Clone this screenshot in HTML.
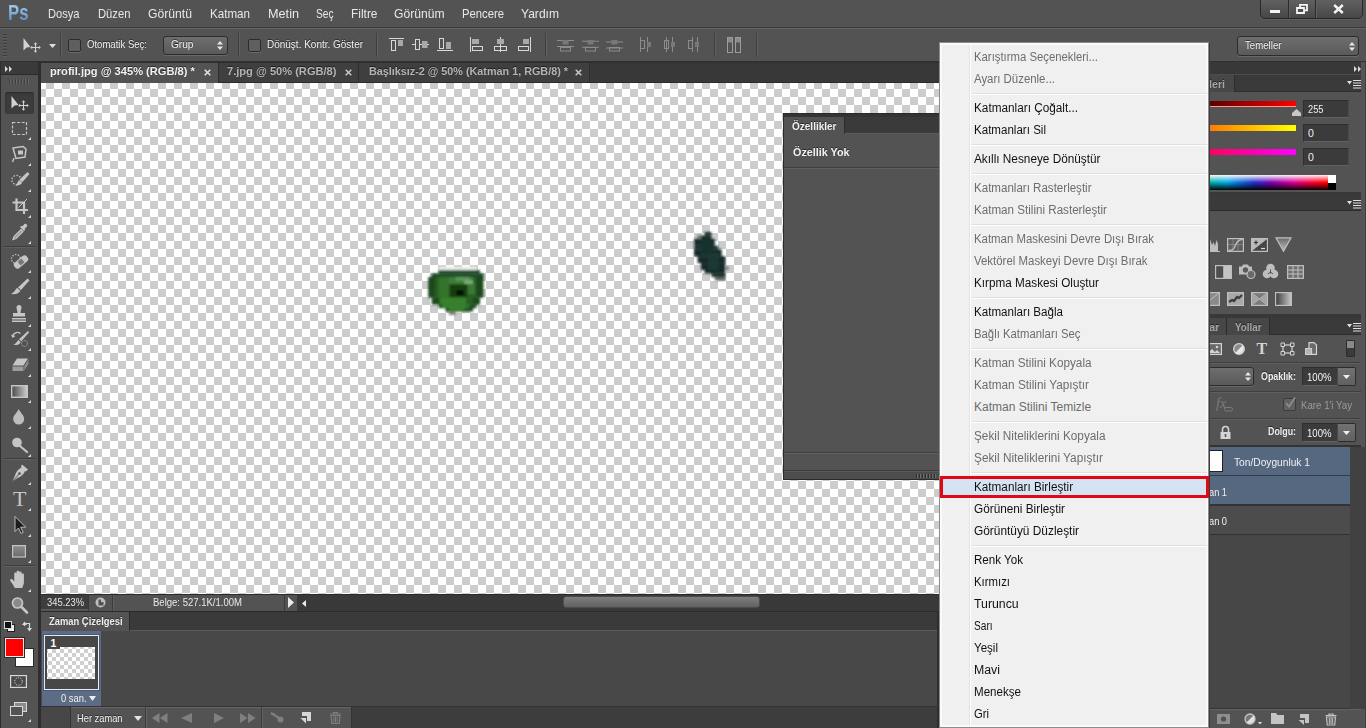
<!DOCTYPE html>
<html lang="tr"><head><meta charset="utf-8"><title>Photoshop</title>
<style>
html,body{margin:0;padding:0}
body{width:1366px;height:728px;overflow:hidden;position:relative;background:#535353;font-family:"Liberation Sans", sans-serif;}
.t{position:absolute;white-space:nowrap;transform-origin:0 0;display:block}
.a{position:absolute}
svg{position:absolute;overflow:visible}
</style></head>
<body>
<div style="position:absolute;left:0px;top:0px;width:1366px;height:27px;background:#535353;"></div>
<div style="position:absolute;left:0px;top:27px;width:1366px;height:1px;background:#383838;"></div>
<div style="position:absolute;left:0px;top:28px;width:1366px;height:34px;background:#535353;border-top:1px solid #656565;box-sizing:border-box;"></div>
<div style="position:absolute;left:0px;top:61px;width:1366px;height:2px;background:#303030;"></div>
<div style="position:absolute;left:0px;top:63px;width:1366px;height:20px;background:#383838;"></div>
<div style="position:absolute;left:0px;top:62px;width:40px;height:666px;background:#535353;"></div>
<div style="position:absolute;left:0px;top:62px;width:40px;height:13px;background:#3a3a3a;"></div>
<div style="position:absolute;left:40px;top:62px;width:1px;height:666px;background:#2b2b2b;"></div>
<div class="a" style="left:41px;top:83px;width:899px;height:511px;background-color:#fff;background-image:conic-gradient(#cccccc 25%,#ffffff 0 50%,#cccccc 0 75%,#ffffff 0);background-size:16px 16px;background-position:-3px -2px;"></div>
<div style="position:absolute;left:41px;top:82px;width:900px;height:1px;background:#2b2b2b;"></div>
<div style="position:absolute;left:41px;top:594px;width:899px;height:18px;background:#3a3a3a;"></div>
<div style="position:absolute;left:41px;top:594px;width:256px;height:17px;background:#535353;"></div>
<div style="position:absolute;left:41px;top:612px;width:899px;height:19px;background:#3a3a3a;"></div>
<div style="position:absolute;left:41px;top:631px;width:899px;height:75px;background:#484848;"></div>
<div style="position:absolute;left:41px;top:706px;width:899px;height:22px;background:#3f3f3f;"></div>
<div style="position:absolute;left:1209px;top:62px;width:157px;height:666px;background:#535353;"></div>
<span class="t" style="left:8px;top:1.7px;font-size:21.5px;line-height:23.5px;color:#6c9fd6;font-weight:bold;transform:scaleX(0.779);background:linear-gradient(#9ac2ea 25%,#5a92ce 80%);-webkit-background-clip:text;background-clip:text;-webkit-text-fill-color:transparent;">Ps</span>
<span class="t" style="left:47.5px;top:6px;font-size:13px;line-height:15px;color:#e8e8e8;transform:scaleX(0.855);">Dosya</span>
<span class="t" style="left:97.5px;top:6px;font-size:13px;line-height:15px;color:#e8e8e8;transform:scaleX(0.865);">Düzen</span>
<span class="t" style="left:148px;top:6px;font-size:13px;line-height:15px;color:#e8e8e8;transform:scaleX(0.936);">Görüntü</span>
<span class="t" style="left:210px;top:6px;font-size:13px;line-height:15px;color:#e8e8e8;transform:scaleX(0.893);">Katman</span>
<span class="t" style="left:268px;top:6px;font-size:13px;line-height:15px;color:#e8e8e8;transform:scaleX(0.975);">Metin</span>
<span class="t" style="left:316px;top:6px;font-size:13px;line-height:15px;color:#e8e8e8;transform:scaleX(0.781);">Seç</span>
<span class="t" style="left:351px;top:6px;font-size:13px;line-height:15px;color:#e8e8e8;transform:scaleX(0.917);">Filtre</span>
<span class="t" style="left:393.5px;top:6px;font-size:13px;line-height:15px;color:#e8e8e8;transform:scaleX(0.932);">Görünüm</span>
<span class="t" style="left:462px;top:6px;font-size:13px;line-height:15px;color:#e8e8e8;transform:scaleX(0.867);">Pencere</span>
<span class="t" style="left:521px;top:6px;font-size:13px;line-height:15px;color:#e8e8e8;transform:scaleX(0.928);">Yardım</span>
<div class="a" style="left:3px;top:34px;width:4px;height:23px;background:repeating-linear-gradient(#3c3c3c 0 1px,#5e5e5e 1px 2px,#535353 2px 3px)"></div>
<svg style="left:23px;top:37.5px" width="18" height="15" viewBox="0 0 18 15"><path d="M0.5 0 L0.5 12.5 L3.6 9.5 L7.5 9 Z" fill="#d2d2d2"/><path d="M12.5 5.5v8M8.5 9.5h8" stroke="#d2d2d2" stroke-width="1.1" fill="none"/><path d="M12.5 4.2l1.8 2h-3.6zM12.5 14.8l1.8-2h-3.6zM7.2 9.5l2-1.8v3.6zM17.8 9.5l-2-1.8v3.6z" fill="#d2d2d2"/></svg>
<svg style="left:49px;top:44px" width="7" height="4" viewBox="0 0 7 4"><path d="M0 0h7l-3.5 4z" fill="#e0e0e0"/></svg>
<div style="position:absolute;left:60px;top:33px;width:1px;height:24px;background:#3e3e3e;"></div><div style="position:absolute;left:61px;top:33px;width:1px;height:24px;background:#616161;"></div>
<div style="position:absolute;left:68px;top:39px;width:13px;height:13px;background:#5f5f5f;border:1px solid #2c2c2c;box-sizing:border-box;border-radius:2px;box-shadow:0 1px 0 #6a6a6a;"></div>
<span class="t" style="left:87.3px;top:38.4px;font-size:10.5px;line-height:12.5px;color:#f0f0f0;transform:scaleX(0.910);text-shadow:0 -1px 0 rgba(0,0,0,.55);">Otomatik Seç:</span>
<div style="position:absolute;left:163px;top:36px;width:65px;height:19px;background:linear-gradient(#6e6e6e,#5a5a5a);border:1px solid #2c2c2c;box-sizing:border-box;border-radius:3px;box-shadow:0 1px 0 #686868;"></div>
<span class="t" style="left:171px;top:38.2px;font-size:10.5px;line-height:12.5px;color:#f0f0f0;transform:scaleX(0.964);text-shadow:0 -1px 0 rgba(0,0,0,.55);">Grup</span>
<svg style="left:217px;top:41px" width="6" height="9" viewBox="0 0 6 9"><path d="M0 3.500h6l-3-3.500zM0 5.500h6l-3 3.500z" fill="#e8e8e8"/></svg>
<div style="position:absolute;left:238px;top:33px;width:1px;height:24px;background:#3e3e3e;"></div><div style="position:absolute;left:239px;top:33px;width:1px;height:24px;background:#616161;"></div>
<div style="position:absolute;left:248px;top:39px;width:13px;height:13px;background:#5f5f5f;border:1px solid #2c2c2c;box-sizing:border-box;border-radius:2px;box-shadow:0 1px 0 #6a6a6a;"></div>
<span class="t" style="left:266.5px;top:38.4px;font-size:10.5px;line-height:12.5px;color:#f0f0f0;transform:scaleX(0.951);text-shadow:0 -1px 0 rgba(0,0,0,.55);">Dönüşt. Kontr. Göster</span>
<div style="position:absolute;left:376px;top:33px;width:1px;height:24px;background:#3e3e3e;"></div><div style="position:absolute;left:377px;top:33px;width:1px;height:24px;background:#616161;"></div>
<div style="position:absolute;left:41px;top:63px;width:177px;height:20px;background:#535353;"></div>
<div style="position:absolute;left:218px;top:62px;width:1px;height:20px;background:#2d2d2d;"></div>
<div style="position:absolute;left:219px;top:63px;width:371px;height:19px;background:#3f3f3f;"></div>
<div style="position:absolute;left:358px;top:62px;width:1px;height:20px;background:#2d2d2d;"></div>
<div style="position:absolute;left:589px;top:62px;width:1px;height:20px;background:#2d2d2d;"></div>
<span class="t" style="left:50px;top:65.3px;font-size:11.5px;line-height:13.5px;color:#f2f2f2;font-weight:bold;transform:scaleX(0.967);text-shadow:0 -1px 0 rgba(0,0,0,.5);">profil.jpg @ 345% (RGB/8) *</span>
<span class="t" style="left:226.5px;top:65.3px;font-size:11.5px;line-height:13.5px;color:#b4b4b4;font-weight:bold;transform:scaleX(0.965);text-shadow:0 -1px 0 rgba(0,0,0,.5);">7.jpg @ 50% (RGB/8)</span>
<span class="t" style="left:368.5px;top:65.3px;font-size:11.5px;line-height:13.5px;color:#b4b4b4;font-weight:bold;transform:scaleX(0.939);text-shadow:0 -1px 0 rgba(0,0,0,.5);">Başlıksız-2 @ 50% (Katman 1, RGB/8) *</span>
<svg style="left:204px;top:69px" width="7" height="7" viewBox="0 0 7 7"><path d="M0.7 0.7l5.6 5.6M6.3 0.7l-5.6 5.6" stroke="#e6e6e6" stroke-width="1.5"/></svg>
<svg style="left:345px;top:69px" width="7" height="7" viewBox="0 0 7 7"><path d="M0.7 0.7l5.6 5.6M6.3 0.7l-5.6 5.6" stroke="#c8c8c8" stroke-width="1.5"/></svg>
<svg style="left:575px;top:69px" width="7" height="7" viewBox="0 0 7 7"><path d="M0.7 0.7l5.6 5.6M6.3 0.7l-5.6 5.6" stroke="#c8c8c8" stroke-width="1.5"/></svg>
<svg style="left:388px;top:36px" width="20" height="18" viewBox="0 0 20 18"><path d="M1 2.5h15" fill="none" stroke="#d8d8d8" stroke-width="1"/><rect x="3.5" y="4.5" width="4" height="10" fill="none" stroke="#d8d8d8" stroke-width="1"/><rect x="10" y="4" width="5" height="6" fill="#a9a9a9"/></svg>
<svg style="left:411px;top:36px" width="20" height="18" viewBox="0 0 20 18"><path d="M1 8.5h17" fill="none" stroke="#d8d8d8" stroke-width="1"/><rect x="4.5" y="3.5" width="4" height="10"  stroke="#d8d8d8" stroke-width="1" fill="#535353"/><rect x="11" y="5" width="5.5" height="7" fill="#a9a9a9"/></svg>
<svg style="left:436px;top:36px" width="20" height="18" viewBox="0 0 20 18"><path d="M1 14.5h16" fill="none" stroke="#d8d8d8" stroke-width="1"/><rect x="3.5" y="2.5" width="4" height="10" fill="none" stroke="#d8d8d8" stroke-width="1"/><rect x="10" y="6" width="5" height="7" fill="#a9a9a9"/></svg>
<svg style="left:468px;top:36px" width="20" height="18" viewBox="0 0 20 18"><path d="M2.5 1v15" fill="none" stroke="#d8d8d8" stroke-width="1"/><rect x="4" y="3" width="7" height="5" fill="#a9a9a9"/><rect x="4.5" y="10.5" width="10" height="4" fill="none" stroke="#d8d8d8" stroke-width="1"/></svg>
<svg style="left:492px;top:36px" width="20" height="18" viewBox="0 0 20 18"><path d="M8.5 1v15" fill="none" stroke="#d8d8d8" stroke-width="1"/><rect x="5" y="3" width="7" height="5" fill="#a9a9a9"/><rect x="2.5" y="10.5" width="12" height="4"  stroke="#d8d8d8" stroke-width="1" fill="#535353"/><path d="M8.5 10v5" fill="none" stroke="#d8d8d8" stroke-width="1"/></svg>
<svg style="left:516px;top:36px" width="20" height="18" viewBox="0 0 20 18"><path d="M14.5 1v15" fill="none" stroke="#d8d8d8" stroke-width="1"/><rect x="7" y="3" width="6" height="5" fill="#a9a9a9"/><rect x="2.5" y="10.5" width="10" height="4" fill="none" stroke="#d8d8d8" stroke-width="1"/></svg>
<div style="position:absolute;left:545px;top:33px;width:1px;height:24px;background:#3e3e3e;"></div><div style="position:absolute;left:546px;top:33px;width:1px;height:24px;background:#616161;"></div>
<svg style="left:556px;top:36px" width="20" height="18" viewBox="0 0 20 18"><path d="M1 4.5h17M1 10.5h17" fill="none" stroke="#8c8c8c" stroke-width="1"/><rect x="6.5" y="4" width="6" height="4.5" fill="#787878"/><rect x="4.5" y="11.5" width="10" height="3.5" fill="none" stroke="#8c8c8c" stroke-width="1"/></svg>
<svg style="left:581px;top:36px" width="20" height="18" viewBox="0 0 20 18"><path d="M1 5.25h17M1 11.25h17" fill="none" stroke="#8c8c8c" stroke-width="1"/><rect x="6.5" y="4" width="6" height="4.5" fill="#787878"/><rect x="4.5" y="11.5" width="10" height="3.5" fill="none" stroke="#8c8c8c" stroke-width="1"/></svg>
<svg style="left:605px;top:36px" width="20" height="18" viewBox="0 0 20 18"><path d="M1 6h17M1 12h17" fill="none" stroke="#8c8c8c" stroke-width="1"/><rect x="6.5" y="4" width="6" height="4.5" fill="#787878"/><rect x="4.5" y="11.5" width="10" height="3.5" fill="none" stroke="#8c8c8c" stroke-width="1"/></svg>
<svg style="left:638px;top:36px" width="20" height="18" viewBox="0 0 20 18"><path d="M2.5 1v15M9.5 1v15" fill="none" stroke="#8c8c8c" stroke-width="1"/><rect x="2.5" y="4.5" width="4" height="8" fill="none" stroke="#8c8c8c" stroke-width="1"/><rect x="9" y="6" width="4" height="5" fill="#787878"/></svg>
<svg style="left:662px;top:36px" width="20" height="18" viewBox="0 0 20 18"><path d="M4.5 1v15M10.5 1v15" fill="none" stroke="#8c8c8c" stroke-width="1"/><rect x="2.5" y="4.5" width="4" height="8" fill="none" stroke="#8c8c8c" stroke-width="1"/><rect x="9" y="6" width="4" height="5" fill="#787878"/></svg>
<svg style="left:686px;top:36px" width="20" height="18" viewBox="0 0 20 18"><path d="M6.5 1v15M11.5 1v15" fill="none" stroke="#8c8c8c" stroke-width="1"/><rect x="2.5" y="4.5" width="4" height="8" fill="none" stroke="#8c8c8c" stroke-width="1"/><rect x="9" y="6" width="4" height="5" fill="#787878"/></svg>
<div style="position:absolute;left:714px;top:33px;width:1px;height:24px;background:#3e3e3e;"></div><div style="position:absolute;left:715px;top:33px;width:1px;height:24px;background:#616161;"></div>
<svg style="left:725px;top:36px" width="20" height="18" viewBox="0 0 20 18"><rect x="2.5" y="1.5" width="5" height="15" fill="none" stroke="#9c9c9c" stroke-width="1"/><rect x="10.5" y="1.5" width="5" height="15" fill="none" stroke="#9c9c9c" stroke-width="1"/><rect x="3" y="2" width="4" height="4.5" fill="#8a8a8a"/><rect x="11" y="2" width="4" height="4.5" fill="#8a8a8a"/></svg>
<div style="position:absolute;left:756px;top:33px;width:1px;height:24px;background:#3e3e3e;"></div><div style="position:absolute;left:757px;top:33px;width:1px;height:24px;background:#616161;"></div>
<div style="position:absolute;left:1260px;top:-2px;width:103px;height:21px;background:linear-gradient(#626262,#474747);border:1px solid #282828;box-sizing:border-box;border-radius:0 0 5px 5px;box-shadow:0 1px 0 #5e5e5e;"></div>
<div style="position:absolute;left:1288px;top:0px;width:1px;height:18px;background:#2c2c2c;"></div>
<div style="position:absolute;left:1289px;top:0px;width:1px;height:18px;background:#606060;"></div>
<div style="position:absolute;left:1315px;top:0px;width:1px;height:18px;background:#2c2c2c;"></div>
<div style="position:absolute;left:1316px;top:0px;width:1px;height:18px;background:#606060;"></div>
<div style="position:absolute;left:1270px;top:10px;width:10px;height:3px;background:#f4f4f4;"></div>
<svg style="left:1296px;top:4px" width="12" height="10" viewBox="0 0 12 10"><path d="M4 0.9h7v5.5h-7z" fill="none" stroke="#f4f4f4" stroke-width="1.8"/><path d="M1 4h7v5h-7z" fill="#4f4f4f" stroke="#f4f4f4" stroke-width="1.8"/></svg>
<svg style="left:1333px;top:5px" width="11" height="8" viewBox="0 0 11 8"><path d="M1.2 0l8.6 8M9.8 0l-8.6 8" stroke="#f4f4f4" stroke-width="2.4"/></svg>
<div style="position:absolute;left:1237px;top:36px;width:122px;height:20px;background:linear-gradient(#6e6e6e,#5a5a5a);border:1px solid #2c2c2c;box-sizing:border-box;border-radius:3px;box-shadow:0 1px 0 #686868;"></div>
<span class="t" style="left:1245px;top:39.7px;font-size:10px;line-height:12px;color:#f0f0f0;transform:scaleX(0.966);text-shadow:0 -1px 0 rgba(0,0,0,.55);">Temeller</span>
<svg style="left:1348.5px;top:42px" width="6" height="9" viewBox="0 0 6 9"><path d="M0 3.500h6l-3-3.500zM0 5.500h6l-3 3.500z" fill="#e8e8e8"/></svg>
<div style="position:absolute;left:0px;top:62px;width:1px;height:666px;background:#2e2e2e;"></div>
<div style="position:absolute;left:38px;top:62px;width:3px;height:666px;background:#2e2e2e;"></div>
<div style="position:absolute;left:0px;top:74px;width:38px;height:1px;background:#2a2a2a;"></div>
<svg style="left:5px;top:66px" width="7" height="6" viewBox="0 0 7 6"><path d="M0 0l3 3l-3 3zM4 0l3 3l-3 3z" fill="#dcdcdc"/></svg>
<div class="a" style="left:9px;top:79px;width:21px;height:5px;background:repeating-linear-gradient(90deg,#3b3b3b 0 1px,#6a6a6a 1px 2px,#535353 2px 3px);opacity:.9"></div>
<div style="position:absolute;left:5px;top:92px;width:29px;height:22px;background:#3c3c3c;border-radius:3px;box-shadow:inset 0 1px 2px #2a2a2a;"></div>
<svg style="left:11px;top:96px" width="18" height="15" viewBox="0 0 18 15"><path d="M0.5 0 L0.5 12.5 L3.6 9.5 L7.5 9 Z" fill="#d2d2d2"/><path d="M12.5 5.5v8M8.5 9.5h8" stroke="#d2d2d2" stroke-width="1.1" fill="none"/><path d="M12.5 4.2l1.8 2h-3.6zM12.5 14.8l1.8-2h-3.6zM7.2 9.5l2-1.8v3.6zM17.8 9.5l-2-1.8v3.6z" fill="#d2d2d2"/></svg>
<svg style="left:10px;top:118px" width="20" height="20" viewBox="0 0 20 20"><rect x="2.5" y="4.5" width="14" height="12" fill="none" stroke="#c6c6c6" stroke-width="1.2" stroke-dasharray="3 1.6"/></svg><svg style="left:28px;top:137px" width="3" height="3" viewBox="0 0 3 3"><path d="M3 0v3h-3z" fill="#d8d8d8"/></svg>
<svg style="left:10px;top:144px" width="20" height="20" viewBox="0 0 20 20"><path d="M3 4l10-1.5l3 2.5l-1 8l-9 1.5z" fill="none" stroke="#c6c6c6" stroke-width="1.5"/><path d="M8 6.5h5v4h-5z" fill="#c6c6c6"/><path d="M4 14l-1.5 4" stroke="#c6c6c6" stroke-width="1.4"/></svg><svg style="left:28px;top:163px" width="3" height="3" viewBox="0 0 3 3"><path d="M3 0v3h-3z" fill="#d8d8d8"/></svg>
<svg style="left:10px;top:170px" width="20" height="20" viewBox="0 0 20 20"><circle cx="6.500" cy="10" r="4.600" fill="none" stroke="#c6c6c6" stroke-width="1.300" stroke-dasharray="1.500 1.500"/><path d="M17.500 2l2 2l-7 8l-3-2.500z" fill="#c6c6c6"/><path d="M9 10l3.200 2.600c-1.200 2.400-4.200 3.400-7.200 2.800c2-.8 2.500-3 4-5.400z" fill="#c6c6c6"/></svg><svg style="left:28px;top:189px" width="3" height="3" viewBox="0 0 3 3"><path d="M3 0v3h-3z" fill="#d8d8d8"/></svg>
<svg style="left:10px;top:196px" width="20" height="20" viewBox="0 0 20 20"><path d="M6.500 2.500v11.500h11.500M2.500 6.500h11.500v11.500" fill="none" stroke="#c6c6c6" stroke-width="2.200"/><path d="M17 3l-8.500 8.500" stroke="#c6c6c6" stroke-width="1"/></svg><svg style="left:28px;top:215px" width="3" height="3" viewBox="0 0 3 3"><path d="M3 0v3h-3z" fill="#d8d8d8"/></svg>
<svg style="left:10px;top:222px" width="20" height="20" viewBox="0 0 20 20"><path d="M14.500 2c1.500-1 3.500 1 2.500 2.500l-2.500 2.500l.8.800l-1.300 1.300l-4-4l1.300-1.300l.8.800z" fill="#c6c6c6"/><path d="M11 7.500l2 2l-7 7l-3 1l1-3z" fill="#9a9a9a" stroke="#c6c6c6" stroke-width="1.200"/></svg><svg style="left:28px;top:241px" width="3" height="3" viewBox="0 0 3 3"><path d="M3 0v3h-3z" fill="#d8d8d8"/></svg>
<div style="position:absolute;left:4px;top:246px;width:31px;height:1px;background:#3d3d3d;"></div><div style="position:absolute;left:4px;top:247px;width:31px;height:1px;background:#606060;"></div>
<svg style="left:10px;top:251px" width="20" height="20" viewBox="0 0 20 20"><circle cx="6" cy="8" r="4.500" fill="none" stroke="#c6c6c6" stroke-width="1.200" stroke-dasharray="1.400 1.400"/><g transform="rotate(-40 11 11)"><rect x="3" y="7.500" width="16" height="7" rx="3" fill="#c6c6c6"/><rect x="8.500" y="8.500" width="5" height="5" fill="#777"/></g></svg><svg style="left:28px;top:270px" width="3" height="3" viewBox="0 0 3 3"><path d="M3 0v3h-3z" fill="#d8d8d8"/></svg>
<svg style="left:10px;top:277px" width="20" height="20" viewBox="0 0 20 20"><path d="M17.500 1.500l2 1.800l-8.500 9.700l-3-2.600z" fill="#c6c6c6"/><path d="M7 10.800l3.400 2.900c-1.500 3-5.500 3.800-9.400 3.300c3-1.200 3.800-3.400 6-6.200z" fill="#c6c6c6"/></svg><svg style="left:28px;top:296px" width="3" height="3" viewBox="0 0 3 3"><path d="M3 0v3h-3z" fill="#d8d8d8"/></svg>
<svg style="left:10px;top:304.5px" width="20" height="20" viewBox="0 0 20 20"><path transform="translate(-1.500 0)" d="M8 2.500a2.500 2.500 0 0 1 5 0c0 2-1 3-1 5.500h4.500v3.500h-12v-3.500h4.500c0-2.500-1-3.500-1-5.500z" fill="#c6c6c6"/><rect x="2" y="13" width="14" height="1.500" fill="#c6c6c6"/><rect x="2" y="15.500" width="14" height="1.500" fill="#c6c6c6"/></svg><svg style="left:28px;top:323.5px" width="3" height="3" viewBox="0 0 3 3"><path d="M3 0v3h-3z" fill="#d8d8d8"/></svg>
<svg style="left:10px;top:329px" width="20" height="20" viewBox="0 0 20 20"><path d="M18 2l1.200 1.200l-8 9l-2.200-2z" fill="#c6c6c6"/><path d="M8.300 10.900l2.400 2c-1.200 2.600-4 3.600-7.500 3.100c2.500-1 3-2.800 5.100-5.100z" fill="#c6c6c6"/><path d="M2.500 8a5 5 0 0 1 8-3.500" fill="none" stroke="#c6c6c6" stroke-width="1.300"/><path d="M1 5.500l1.500 3.500l3-2z" fill="#c6c6c6"/><circle cx="14.500" cy="14.500" r="3" fill="none" stroke="#c6c6c6" stroke-width="1" stroke-dasharray="1 1.300"/></svg><svg style="left:28px;top:348px" width="3" height="3" viewBox="0 0 3 3"><path d="M3 0v3h-3z" fill="#d8d8d8"/></svg>
<svg style="left:10px;top:355px" width="20" height="20" viewBox="0 0 20 20"><path d="M7 3.500h11l-4.500 7h-11z" fill="#c6c6c6"/><path d="M2.500 11.500h11v4.500h-11z" fill="#9c9c9c"/><path d="M14.300 11l4.200-6.500v4.500l-4.200 6.500z" fill="#8a8a8a"/></svg><svg style="left:28px;top:374px" width="3" height="3" viewBox="0 0 3 3"><path d="M3 0v3h-3z" fill="#d8d8d8"/></svg>
<svg style="left:10px;top:381px" width="20" height="20" viewBox="0 0 20 20"><defs><linearGradient id="gr1" x1="0" x2="1" y1="0" y2="0"><stop offset="0" stop-color="#4a4a4a"/><stop offset="1" stop-color="#cfcfcf"/></linearGradient></defs><rect x="1.700" y="4.700" width="15.600" height="11.600" fill="url(#gr1)" stroke="#c6c6c6" stroke-width="1.400"/></svg><svg style="left:28px;top:400px" width="3" height="3" viewBox="0 0 3 3"><path d="M3 0v3h-3z" fill="#d8d8d8"/></svg>
<svg style="left:10px;top:407px" width="20" height="20" viewBox="0 0 20 20"><path transform="translate(-1.300 0)" d="M10 2c2 4 5.500 6.500 5.500 10a5.500 5.500 0 0 1-11 0c0-3.500 3.500-6 5.500-10z" fill="#bdbdbd"/></svg><svg style="left:28px;top:426px" width="3" height="3" viewBox="0 0 3 3"><path d="M3 0v3h-3z" fill="#d8d8d8"/></svg>
<svg style="left:10px;top:434.5px" width="20" height="20" viewBox="0 0 20 20"><circle cx="7" cy="7.500" r="4.800" fill="#c4c4c4"/><path d="M10 11l7 6" stroke="#c6c6c6" stroke-width="2.200" stroke-linecap="round"/></svg><svg style="left:28px;top:453.5px" width="3" height="3" viewBox="0 0 3 3"><path d="M3 0v3h-3z" fill="#d8d8d8"/></svg>
<div style="position:absolute;left:4px;top:458px;width:31px;height:1px;background:#3d3d3d;"></div><div style="position:absolute;left:4px;top:459px;width:31px;height:1px;background:#606060;"></div>
<svg style="left:10px;top:463px" width="20" height="20" viewBox="0 0 20 20"><path d="M12 1.500l6 5l-2 2l-1-.5c-1 3-3.500 5.500-7.500 7l-5 3.500l2.500-6c1-3.500 3-6.500 6.500-8l-.5-1z" fill="#c6c6c6"/><circle cx="9.500" cy="10.500" r="1.300" fill="#535353"/><path d="M3 18l6-7" stroke="#535353" stroke-width=".9"/></svg><svg style="left:28px;top:482px" width="3" height="3" viewBox="0 0 3 3"><path d="M3 0v3h-3z" fill="#d8d8d8"/></svg>
<span class="t" style="left:13px;top:487px;font-size:22px;line-height:24px;color:#c6c6c6;font-family:'Liberation Serif',serif;">T</span>
<svg style="left:28px;top:508px" width="3" height="3" viewBox="0 0 3 3"><path d="M3 0v3h-3z" fill="#d8d8d8"/></svg>
<svg style="left:10px;top:515px" width="20" height="20" viewBox="0 0 20 20"><path d="M5 1.500v15l3.500-3.500l2.500 5.500l2.200-1l-2.500-5.300h5z" fill="#1c1c1c" stroke="#bdbdbd" stroke-width="1"/></svg><svg style="left:28px;top:534px" width="3" height="3" viewBox="0 0 3 3"><path d="M3 0v3h-3z" fill="#d8d8d8"/></svg>
<svg style="left:10px;top:541px" width="20" height="20" viewBox="0 0 20 20"><defs><linearGradient id="gr2" x1="0" x2="0" y1="0" y2="1"><stop offset="0" stop-color="#8d8d8d"/><stop offset="1" stop-color="#6b6b6b"/></linearGradient></defs><rect x="2.600" y="4.600" width="12.800" height="11.400" fill="url(#gr2)" stroke="#c4c4c4" stroke-width="1.200"/></svg><svg style="left:28px;top:560px" width="3" height="3" viewBox="0 0 3 3"><path d="M3 0v3h-3z" fill="#d8d8d8"/></svg>
<div style="position:absolute;left:4px;top:565px;width:31px;height:1px;background:#3d3d3d;"></div><div style="position:absolute;left:4px;top:566px;width:31px;height:1px;background:#606060;"></div>
<svg style="left:10px;top:570px" width="20" height="20" viewBox="0 0 20 20"><path transform="translate(-1.500 -1.500) scale(1.150)" d="M5.500 17c-1-2.500-3-4.500-4-6.500c-.5-1.300 1-2 2-1l1.500 1.800v-6.800c0-1.500 2-1.500 2 0v-1.500c0-1.500 2.200-1.500 2.200 0v.8c0-1.500 2.200-1.500 2.200 0v1.500c0-1.400 2-1.400 2 0v6.700c0 2-1 3.500-1.500 5z" fill="#c6c6c6"/></svg><svg style="left:28px;top:589px" width="3" height="3" viewBox="0 0 3 3"><path d="M3 0v3h-3z" fill="#d8d8d8"/></svg>
<svg style="left:10px;top:594.5px" width="20" height="20" viewBox="0 0 20 20"><circle cx="7.500" cy="8" r="5" fill="#8a8a8a" stroke="#c6c6c6" stroke-width="1.700"/><path d="M11.500 12l5.500 5.500" stroke="#c6c6c6" stroke-width="2.600" stroke-linecap="round"/></svg>
<svg style="left:4px;top:621px" width="11" height="11" viewBox="0 0 11 11"><rect x="3.500" y="3.500" width="7" height="7" fill="#f0f0f0" stroke="#222" stroke-width="1"/><rect x=".5" y=".5" width="7" height="7" fill="#111" stroke="#d8d8d8" stroke-width="1"/></svg>
<svg style="left:22px;top:621px" width="10" height="11" viewBox="0 0 10 11"><path d="M2.500 5v-2.500h5v5.500" fill="none" stroke="#d8d8d8" stroke-width="1.200"/><path d="M0 4l2.500-3.500l2.500 3.500zM5 7l2.500 3.500l2.500-3.500z" fill="#d8d8d8" transform="translate(0 0)"/></svg>
<div style="position:absolute;left:15px;top:648px;width:19px;height:19px;background:#ffffff;border:1px solid #2a2a2a;box-sizing:border-box;outline:0"></div>
<div style="position:absolute;left:5px;top:638px;width:19px;height:19px;background:#ff0000;border:1px solid #e8e8e8;box-sizing:border-box;box-shadow:0 0 0 1px #2a2a2a;"></div>
<svg style="left:10px;top:675px" width="17" height="13" viewBox="0 0 17 13"><rect x=".6" y=".6" width="15.800" height="11.800" fill="#4a4a4a" stroke="#d8d8d8" stroke-width="1.200"/><circle cx="8.500" cy="6.500" r="3.800" fill="none" stroke="#d8d8d8" stroke-width="1" stroke-dasharray="1.200 1.200"/></svg>
<svg style="left:10px;top:702px" width="18" height="15" viewBox="0 0 18 15"><rect x="4.500" y=".5" width="12" height="9" fill="#8c8c8c" stroke="#d8d8d8"/><rect x=".5" y="4.500" width="12" height="9" fill="#535353" stroke="#d8d8d8"/></svg>
<svg style="left:28px;top:719px" width="3" height="3" viewBox="0 0 3 3"><path d="M3 0v3h-3z" fill="#d8d8d8"/></svg>
<div style="position:absolute;left:41px;top:594px;width:899px;height:1px;background:#2b2b2b;"></div>
<div style="position:absolute;left:41px;top:595px;width:47px;height:14px;background:#3d3d3d;border-bottom:1px solid #5e5e5e;"></div>
<span class="t" style="left:46.5px;top:596px;font-size:10.5px;line-height:12.5px;color:#e4e4e4;transform:scaleX(0.893);">345.23%</span>
<div style="position:absolute;left:88px;top:595px;width:1px;height:16px;background:#3a3a3a;"></div>
<svg style="left:95px;top:597px" width="11" height="11" viewBox="0 0 11 11"><circle cx="5.500" cy="5.500" r="5" fill="#bdbdbd"/><path d="M3.500 2.500h2.500v2.500h2.500v3.500h-5z" fill="#535353"/></svg>
<div style="position:absolute;left:112px;top:595px;width:1px;height:16px;background:#3a3a3a;"></div>
<div style="position:absolute;left:113px;top:595px;width:1px;height:16px;background:#5f5f5f;"></div>
<span class="t" style="left:153px;top:596px;font-size:10.5px;line-height:12.5px;color:#e8e8e8;transform:scaleX(0.907);">Belge: 527.1K/1.00M</span>
<div style="position:absolute;left:284px;top:595px;width:1px;height:16px;background:#3a3a3a;"></div>
<svg style="left:288px;top:597px" width="6" height="11" viewBox="0 0 6 11"><path d="M0 0l6 5.500l-6 5.500z" fill="#eaeaea"/></svg>
<div style="position:absolute;left:297px;top:595px;width:643px;height:16px;background:#393939;"></div>
<svg style="left:302px;top:599.5px" width="4" height="7" viewBox="0 0 4 7"><path d="M4 0v7l-4-3.500z" fill="#eaeaea"/></svg>
<div style="position:absolute;left:563px;top:596px;width:197px;height:12px;background:linear-gradient(#7e7e7e,#626262);border-radius:3px;border:1px solid #4c4c4c;box-sizing:border-box;"></div>
<div style="position:absolute;left:41px;top:611px;width:899px;height:1px;background:#2b2b2b;"></div>
<div style="position:absolute;left:41px;top:612px;width:88px;height:19px;background:#535353;"></div>
<div style="position:absolute;left:129px;top:612px;width:1px;height:18px;background:#2b2b2b;"></div>
<div style="position:absolute;left:130px;top:630px;width:810px;height:1px;background:#5a5a5a;"></div>
<span class="t" style="left:48.5px;top:615px;font-size:11px;line-height:13px;color:#f0f0f0;font-weight:bold;transform:scaleX(0.853);text-shadow:0 -1px 0 rgba(0,0,0,.5);">Zaman Çizelgesi</span>
<div style="position:absolute;left:937px;top:612px;width:3px;height:116px;background:#2e2e2e;"></div>
<div style="position:absolute;left:42px;top:631px;width:59px;height:75px;background:#5c6c84;"></div>
<div style="position:absolute;left:44px;top:635px;width:54.5px;height:55px;background:#474747;border:1px solid #e3ebf6;box-sizing:border-box;outline:1px solid #4b5a70;"></div>
<div class="a" style="left:47px;top:647px;width:48px;height:32px;background-color:#fff;background-image:conic-gradient(#cfcfcf 25%,#fff 0 50%,#cfcfcf 0 75%,#fff 0);background-size:8px 8px;background-position:1px 2px"></div>
<div style="position:absolute;left:47px;top:637px;width:13px;height:12px;background:#454545;"></div>
<span class="t" style="left:50.5px;top:637px;font-size:10.5px;line-height:12.5px;color:#ffffff;font-weight:bold;">1</span>
<span class="t" style="left:60.5px;top:692px;font-size:11px;line-height:13px;color:#f0f0f0;transform:scaleX(0.851);">0 san.</span>
<svg style="left:89px;top:696px" width="7" height="5" viewBox="0 0 7 5"><path d="M0 0h7l-3.500 5z" fill="#f0f0f0"/></svg>
<div style="position:absolute;left:41px;top:706px;width:899px;height:1px;background:#333333;"></div>
<div style="position:absolute;left:41px;top:707px;width:30px;height:21px;background:#474747;"></div>
<div style="position:absolute;left:71px;top:707px;width:280px;height:21px;background:#535353;border-top:1px solid #666;box-sizing:border-box;"></div>
<div style="position:absolute;left:70px;top:707px;width:1px;height:21px;background:#333;"></div>
<span class="t" style="left:76.5px;top:711.5px;font-size:11px;line-height:13px;color:#f0f0f0;transform:scaleX(0.846);text-shadow:0 -1px 0 rgba(0,0,0,.55);">Her zaman</span>
<svg style="left:134px;top:715.5px" width="8" height="5" viewBox="0 0 8 5"><path d="M0 0h8l-4 5z" fill="#e4e4e4"/></svg>
<div style="position:absolute;left:145px;top:707px;width:1px;height:21px;background:#3e3e3e;"></div><div style="position:absolute;left:146px;top:707px;width:1px;height:21px;background:#616161;"></div>
<svg style="left:152px;top:713px" width="16" height="10" viewBox="0 0 16 10"><path d="M7.500 0v10l-7.500-5zM15.500 0v10l-7.500-5z" fill="#7f7f7f"/></svg>
<svg style="left:181px;top:713px" width="11" height="10" viewBox="0 0 11 10"><path d="M11 0v10l-11-5z" fill="#7f7f7f"/></svg>
<svg style="left:214px;top:713px" width="10" height="10" viewBox="0 0 10 10"><path d="M0 0v10l10-5z" fill="#7f7f7f"/></svg>
<svg style="left:240px;top:713px" width="16" height="10" viewBox="0 0 16 10"><path d="M0 0v10l7.500-5zM8 0v10l7.500-5z" fill="#7f7f7f"/></svg>
<div style="position:absolute;left:261px;top:707px;width:1px;height:21px;background:#3e3e3e;"></div><div style="position:absolute;left:262px;top:707px;width:1px;height:21px;background:#616161;"></div>
<svg style="left:270px;top:712px" width="15" height="11" viewBox="0 0 15 11"><path d="M1 1l8 5" stroke="#7f7f7f" stroke-width="2.200"/><circle cx="10.500" cy="7.500" r="3" fill="#7f7f7f"/><path d="M4 1l1 3" stroke="#7f7f7f"/></svg>
<svg style="left:300px;top:712px" width="11" height="12" viewBox="0 0 11 12"><path d="M2 0h9v9h-4v-5h-5z" fill="#d6d6d6"/><path d="M0 6h5.500v5.500z" fill="#d6d6d6" transform="translate(0.500 0)"/></svg>
<svg style="left:329px;top:711px" width="13" height="13" viewBox="0 0 13 13"><path d="M1 3h11M4.500 3v-1.500h4v1.500" fill="none" stroke="#7f7f7f" stroke-width="1.200"/><path d="M2 4.500h9l-.8 8h-7.400z" fill="none" stroke="#7f7f7f" stroke-width="1.200"/><path d="M4.800 5.500v6M6.500 5.500v6M8.200 5.500v6" stroke="#7f7f7f" stroke-width="1"/></svg>
<div style="position:absolute;left:351px;top:707px;width:586px;height:21px;background:#3d3d3d;"></div>
<div style="position:absolute;left:351px;top:707px;width:1px;height:21px;background:#333;"></div>
<div style="position:absolute;left:783px;top:113px;width:160px;height:367px;background:#535353;border:1px solid #2a2a2a;box-sizing:border-box;"></div>
<div style="position:absolute;left:784px;top:114px;width:156px;height:3px;background:#343434;"></div>
<div style="position:absolute;left:784px;top:117px;width:156px;height:17px;background:#3a3a3a;"></div>
<div style="position:absolute;left:784px;top:117px;width:60px;height:17px;background:#535353;"></div>
<div style="position:absolute;left:844px;top:117px;width:1px;height:16px;background:#2c2c2c;"></div>
<div style="position:absolute;left:845px;top:133px;width:95px;height:1px;background:#5c5c5c;"></div>
<span class="t" style="left:791.5px;top:119.5px;font-size:11px;line-height:13px;color:#f0f0f0;font-weight:bold;transform:scaleX(0.910);text-shadow:0 -1px 0 rgba(0,0,0,.5);">Özellikler</span>
<span class="t" style="left:793px;top:145.5px;font-size:11px;line-height:13px;color:#f4f4f4;font-weight:bold;transform:scaleX(0.979);text-shadow:0 -1px 0 rgba(0,0,0,.5);">Özellik Yok</span>
<div style="position:absolute;left:784px;top:167px;width:156px;height:1px;background:#3f3f3f;"></div>
<div style="position:absolute;left:784px;top:168px;width:156px;height:1px;background:#5f5f5f;"></div>
<div style="position:absolute;left:784px;top:452px;width:156px;height:1px;background:#3f3f3f;"></div>
<div style="position:absolute;left:784px;top:453px;width:156px;height:1px;background:#626262;"></div>
<div style="position:absolute;left:784px;top:470px;width:156px;height:1px;background:#3a3a3a;"></div>
<div style="position:absolute;left:784px;top:471px;width:156px;height:1px;background:#5c5c5c;"></div>
<div style="position:absolute;left:784px;top:472px;width:156px;height:7px;background:#4d4d4d;"></div>
<div class="a" style="left:916px;top:474px;width:20px;height:4px;background:repeating-linear-gradient(90deg,#2e2e2e 0 1px,#707070 1px 2px,#4d4d4d 2px 3px)"></div>
<div style="position:absolute;left:1209px;top:62px;width:153px;height:13px;background:#383838;"></div>
<div style="position:absolute;left:1209px;top:74px;width:153px;height:1px;background:#4c4c4c;"></div>
<svg style="left:1354px;top:66px" width="7" height="6" viewBox="0 0 7 6"><path d="M0 0l3 3l-3 3zM4 0l3 3l-3 3z" fill="#dcdcdc"/></svg>
<div style="position:absolute;left:1209px;top:75px;width:152px;height:17px;background:#3a3a3a;"></div><div style="position:absolute;left:1209px;top:91px;width:152px;height:1px;background:#2e2e2e;"></div>
<div style="position:absolute;left:1209px;top:75px;width:25px;height:17px;background:#474747;"></div>
<div style="position:absolute;left:1234px;top:75px;width:1px;height:16px;background:#2c2c2c;"></div>
<span class="t" style="left:1209px;top:78px;font-size:11px;line-height:13px;color:#a6a6a6;font-weight:bold;transform:scaleX(0.969);text-shadow:0 -1px 0 rgba(0,0,0,.5);">leri</span>
<svg style="left:1347px;top:80px" width="14" height="8" viewBox="0 0 14 8"><path d="M0 1h5l-2.500 3.500z" fill="#e0e0e0"/><path d="M6 .500h8M6 3h8M6 5.500h8M6 8h8" stroke="#e0e0e0" stroke-width="1"/></svg>
<div style="position:absolute;left:1209px;top:101px;width:87px;height:6px;background:linear-gradient(90deg,#5a0000,#ff0000);border-bottom:1px solid #ff9a8a;box-sizing:border-box;"></div>
<svg style="left:1292px;top:109px" width="9" height="7" viewBox="0 0 9 7"><path d="M4.500 0l4.500 4v3h-9v-3z" fill="#c8c8c8"/></svg>
<div style="position:absolute;left:1303px;top:100px;width:46px;height:18px;background:#3b3b3b;border:1px solid #2e2e2e;border-bottom-color:#626262;border-right-color:#4a4a4a;box-sizing:border-box;"></div>
<span class="t" style="left:1308px;top:103px;font-size:10.5px;line-height:12.5px;color:#f0f0f0;transform:scaleX(0.884);">255</span>
<div style="position:absolute;left:1209px;top:125px;width:87px;height:6px;background:linear-gradient(90deg,#ff7a00,#ffff00);"></div>
<div style="position:absolute;left:1303px;top:124px;width:46px;height:18px;background:#3b3b3b;border:1px solid #2e2e2e;border-bottom-color:#626262;border-right-color:#4a4a4a;box-sizing:border-box;"></div>
<span class="t" style="left:1308px;top:127px;font-size:10.5px;line-height:12.5px;color:#f0f0f0;">0</span>
<div style="position:absolute;left:1209px;top:149px;width:87px;height:6px;background:linear-gradient(90deg,#ff0060,#ff00ff);"></div>
<div style="position:absolute;left:1303px;top:148px;width:46px;height:18px;background:#3b3b3b;border:1px solid #2e2e2e;border-bottom-color:#626262;border-right-color:#4a4a4a;box-sizing:border-box;"></div>
<span class="t" style="left:1308px;top:151px;font-size:10.5px;line-height:12.5px;color:#f0f0f0;">0</span>
<div class="a" style="left:1209px;top:175px;width:119px;height:15px;background:linear-gradient(rgba(255,255,255,.95),rgba(255,255,255,0) 50%,rgba(0,0,0,0) 50%,rgba(0,0,0,.97)),linear-gradient(90deg,#00b09a,#00a8e8 15%,#2030c8 38%,#7a00b0 52%,#e00090 72%,#ff0030 88%,#ff0000)"></div>
<div style="position:absolute;left:1328px;top:175px;width:8px;height:8px;background:#ffffff;"></div>
<div style="position:absolute;left:1328px;top:183px;width:8px;height:7px;background:#000000;"></div>
<div style="position:absolute;left:1209px;top:192px;width:152px;height:1px;background:#2e2e2e;"></div>
<div style="position:absolute;left:1209px;top:192px;width:152px;height:2px;background:#383838;"></div>
<div style="position:absolute;left:1209px;top:194px;width:152px;height:17px;background:#3a3a3a;"></div><div style="position:absolute;left:1209px;top:210px;width:152px;height:1px;background:#2e2e2e;"></div>
<svg style="left:1347px;top:200px" width="14" height="8" viewBox="0 0 14 8"><path d="M0 1h5l-2.500 3.500z" fill="#e0e0e0"/><path d="M6 .500h8M6 3h8M6 5.500h8M6 8h8" stroke="#e0e0e0" stroke-width="1"/></svg>
<svg style="left:1203px;top:238px" width="17" height="14" viewBox="0 0 17 14"><path d="M0 13.500h17" stroke="#bebebe"/><path d="M2 13v-4l2-3l1.500 4l1.500-9l2 6l1.500-3l1.500 4l1.500-6l1.500 4v7z" fill="#bebebe"/></svg>
<svg style="left:1227px;top:238px" width="17" height="14" viewBox="0 0 17 14"><rect x=".6" y=".6" width="15.800" height="12.800" fill="#5e5e5e" stroke="#bebebe" stroke-width="1.200"/><path d="M1 6.500h15M6 1v12M11 1v12" stroke="#8c8c8c" stroke-width=".8"/><path d="M1.500 12.500c5 0 5.500-2 7-5.500s3-5.500 7-5.500" fill="none" stroke="#bebebe" stroke-width="1.400"/></svg>
<svg style="left:1251px;top:238px" width="17" height="14" viewBox="0 0 17 14"><rect x=".6" y=".6" width="15.800" height="12.800" fill="#b8b8b8" stroke="#bebebe" stroke-width="1.200"/><path d="M1.200 12.800l14.600-11.600v11.600z" fill="#454545"/><path d="M3 4.500h4M5 2.500v4" stroke="#333" stroke-width="1.200"/><path d="M10 10.500h4" stroke="#ddd" stroke-width="1.200"/></svg>
<svg style="left:1275px;top:237px" width="17" height="15" viewBox="0 0 17 15"><defs><linearGradient id="gv" x1="0" x2="0" y1="0" y2="1"><stop offset="0" stop-color="#6a6a6a"/><stop offset="1" stop-color="#bdbdbd"/></linearGradient></defs><path d="M1 .8h15l-7.500 13.400z" fill="url(#gv)" stroke="#bebebe" stroke-width="1.200"/></svg>
<svg style="left:1215px;top:265px" width="17" height="14" viewBox="0 0 17 14"><rect x=".6" y=".6" width="15.800" height="12.800" fill="#c4c4c4" stroke="#bebebe" stroke-width="1.200"/><rect x="1.200" y="1.200" width="7" height="11.600" fill="#4e4e4e"/></svg>
<svg style="left:1238px;top:263px" width="18" height="17" viewBox="0 0 18 17"><path d="M1 3.500h3l1-2h5l1 2h3v8h-13z" fill="#bebebe"/><circle cx="7.500" cy="7" r="2.700" fill="#5a5a5a"/><circle cx="13" cy="11.500" r="4" fill="#6a6a6a" stroke="#bebebe" stroke-width="1.200"/></svg>
<svg style="left:1262px;top:263px" width="17" height="16" viewBox="0 0 17 16"><circle cx="8.500" cy="5" r="4.300" fill="#bebebe"/><circle cx="5" cy="11" r="4.300" fill="#bebebe"/><circle cx="12" cy="11" r="4.300" fill="#bebebe"/><path d="M8.500 6.500v4M8.500 9l-2.500 2M8.500 9l2.500 2" stroke="#555" stroke-width="1"/></svg>
<svg style="left:1287px;top:265px" width="17" height="14" viewBox="0 0 17 14"><rect x=".6" y=".6" width="15.800" height="12.800" fill="#707070" stroke="#bebebe" stroke-width="1.200"/><path d="M1 5h15M1 9h15M6 1v12M11 1v12" stroke="#bebebe" stroke-width="1.100"/></svg>
<svg style="left:1203px;top:292px" width="17" height="14" viewBox="0 0 17 14"><rect x=".6" y=".6" width="15.800" height="12.800" fill="#8a8a8a" stroke="#bebebe" stroke-width="1.200"/><path d="M1 13l15-12" stroke="#bebebe"/></svg>
<svg style="left:1227px;top:292px" width="17" height="14" viewBox="0 0 17 14"><rect x=".6" y=".6" width="15.800" height="12.800" fill="#a8a8a8" stroke="#bebebe" stroke-width="1.200"/><path d="M2 10l3-2l2 1l3-4l2 1l3-3" fill="none" stroke="#3c3c3c" stroke-width="2.200"/></svg>
<svg style="left:1251px;top:292px" width="17" height="14" viewBox="0 0 17 14"><rect x=".6" y=".6" width="15.800" height="12.800" fill="#7a7a7a" stroke="#bebebe" stroke-width="1.200"/><path d="M1 1l15 12M16 1l-15 12" stroke="#bebebe" stroke-width="1"/><path d="M1 1l7.500 6l-7.500 6zM16 1l-7.500 6l7.500 6z" fill="#a4a4a4"/></svg>
<svg style="left:1275px;top:292px" width="17" height="14" viewBox="0 0 17 14"><defs><linearGradient id="gm" x1="0" x2="1" y1="0" y2="0"><stop offset="0" stop-color="#3c3c3c"/><stop offset="1" stop-color="#c8c8c8"/></linearGradient></defs><rect x=".6" y=".6" width="15.800" height="12.800" fill="url(#gm)" stroke="#bebebe" stroke-width="1.200"/></svg>
<div style="position:absolute;left:1209px;top:314px;width:152px;height:4px;background:#383838;"></div>
<div style="position:absolute;left:1209px;top:318px;width:152px;height:17px;background:#3a3a3a;"></div><div style="position:absolute;left:1209px;top:334px;width:152px;height:1px;background:#2e2e2e;"></div>
<div style="position:absolute;left:1209px;top:318px;width:17px;height:17px;background:#474747;"></div>
<div style="position:absolute;left:1226px;top:318px;width:1px;height:16px;background:#2c2c2c;"></div>
<div style="position:absolute;left:1227px;top:318px;width:42px;height:17px;background:#474747;"></div>
<div style="position:absolute;left:1269px;top:318px;width:1px;height:16px;background:#2c2c2c;"></div>
<span class="t" style="left:1209px;top:321px;font-size:11px;line-height:13px;color:#a6a6a6;font-weight:bold;text-shadow:0 -1px 0 rgba(0,0,0,.5);">ar</span>
<span class="t" style="left:1234.5px;top:321px;font-size:11px;line-height:13px;color:#a6a6a6;font-weight:bold;transform:scaleX(0.890);text-shadow:0 -1px 0 rgba(0,0,0,.5);">Yollar</span>
<svg style="left:1347px;top:323px" width="14" height="8" viewBox="0 0 14 8"><path d="M0 1h5l-2.500 3.500z" fill="#e0e0e0"/><path d="M6 .500h8M6 3h8M6 5.500h8M6 8h8" stroke="#e0e0e0" stroke-width="1"/></svg>
<svg style="left:1206px;top:343px" width="16" height="12" viewBox="0 0 16 12"><rect x=".6" y=".6" width="14.800" height="10.800" fill="#6a6a6a" stroke="#d4d4d4" stroke-width="1.200"/><path d="M2 10l4-4l3 3l2-2l3 3z" fill="#d4d4d4"/><circle cx="11" cy="4" r="1.300" fill="#d4d4d4"/></svg>
<svg style="left:1233px;top:343px" width="12" height="12" viewBox="0 0 12 12"><circle cx="6" cy="6" r="5.300" fill="#8a8a8a" stroke="#d4d4d4" stroke-width="1.300"/><path d="M2.300 9.700a5.300 5.300 0 0 0 7.400-7.400z" fill="#e8e8e8"/></svg>
<span class="t" style="left:1256.5px;top:339.5px;font-size:16px;line-height:18px;color:#d4d4d4;font-family:'Liberation Serif',serif;font-weight:bold;">T</span>
<svg style="left:1281px;top:343px" width="13" height="12" viewBox="0 0 13 12"><rect x="2" y="2" width="9" height="8" fill="none" stroke="#d4d4d4" stroke-width="1.200"/><path d="M0 0h3.500v3.500h-3.500zM9.500 0h3.500v3.500h-3.500zM0 8.500h3.500v3.500h-3.500zM9.500 8.500h3.500v3.500h-3.500z" fill="#535353" stroke="#d4d4d4" stroke-width="1"/></svg>
<svg style="left:1305px;top:342px" width="12" height="13" viewBox="0 0 12 13"><path d="M4 .6h5l2.500 2.500v9.300h-7.500z" fill="#6a6a6a" stroke="#d4d4d4" stroke-width="1.200"/><rect x=".6" y="6.500" width="6" height="6" fill="#b4b4b4" stroke="#d4d4d4" stroke-width="1"/></svg>
<div style="position:absolute;left:1346px;top:340px;width:9px;height:17px;background:linear-gradient(#8a8a8a 0 45%,#3a3a3a 45%);border:1px solid #2c2c2c;box-sizing:border-box;border-radius:1px;"></div>
<div style="position:absolute;left:1209px;top:362px;width:152px;height:1px;background:#3f3f3f;"></div>
<div style="position:absolute;left:1209px;top:363px;width:152px;height:1px;background:#5f5f5f;"></div>
<div style="position:absolute;left:1200px;top:367px;width:54px;height:19px;background:linear-gradient(#6e6e6e,#5a5a5a);border:1px solid #2c2c2c;box-sizing:border-box;border-radius:3px;box-shadow:0 1px 0 #686868;"></div>
<svg style="left:1244.5px;top:372px" width="6" height="9" viewBox="0 0 6 9"><path d="M0 3.500h6l-3-3.500zM0 5.500h6l-3 3.500z" fill="#e8e8e8"/></svg>
<span class="t" style="left:1261px;top:370.4px;font-size:10.5px;line-height:12.5px;color:#f0f0f0;font-weight:bold;transform:scaleX(0.845);text-shadow:0 -1px 0 rgba(0,0,0,.55);">Opaklık:</span>
<div style="position:absolute;left:1302px;top:367px;width:36px;height:19px;background:#3b3b3b;border:1px solid #2e2e2e;border-bottom-color:#626262;border-right-color:#4a4a4a;box-sizing:border-box;"></div><div style="position:absolute;left:1338px;top:367px;width:18px;height:19px;background:linear-gradient(#727272,#606060);border:1px solid #2c2c2c;border-left:0;box-sizing:border-box;border-radius:0 2px 2px 0;"></div><svg style="left:1343px;top:375px" width="7" height="4" viewBox="0 0 7 4"><path d="M0 0h7l-3.500 4z" fill="#f0f0f0"/></svg>
<span class="t" style="left:1306.5px;top:370.5px;font-size:10.5px;line-height:12.5px;color:#f4f4f4;transform:scaleX(0.912);">100%</span>
<div style="position:absolute;left:1209px;top:391px;width:152px;height:1px;background:#3f3f3f;"></div>
<div style="position:absolute;left:1209px;top:392px;width:152px;height:1px;background:#5f5f5f;"></div>
<span class="t" style="left:1216px;top:396px;font-size:14px;line-height:16px;color:#7c7c7c;font-style:italic;font-family:'Liberation Serif',serif;">fx</span>
<svg style="left:1224px;top:407px" width="9" height="5" viewBox="0 0 9 5"><rect x=".5" y=".5" width="8" height="3.500" rx="1.700" fill="none" stroke="#7c7c7c"/></svg>
<div style="position:absolute;left:1283px;top:398px;width:13px;height:13px;background:#616161;border:1px solid #3c3c3c;box-sizing:border-box;border-radius:2px;"></div>
<svg style="left:1285px;top:397px" width="11" height="11" viewBox="0 0 11 11"><path d="M1 6l3 3.500l6-9" fill="none" stroke="#8c8c8c" stroke-width="1.800"/></svg>
<span class="t" style="left:1301px;top:398.5px;font-size:11px;line-height:13px;color:#9c9c9c;transform:scaleX(0.880);">Kare 1'i Yay</span>
<div style="position:absolute;left:1209px;top:418px;width:152px;height:1px;background:#3f3f3f;"></div>
<div style="position:absolute;left:1209px;top:419px;width:152px;height:1px;background:#5f5f5f;"></div>
<svg style="left:1220px;top:426px" width="11" height="13" viewBox="0 0 11 13"><path d="M2.500 6v-2.500a3 3 0 0 1 6 0v2.500" fill="none" stroke="#d4d4d4" stroke-width="1.600"/><rect x=".5" y="6" width="10" height="7" fill="#d4d4d4"/><rect x="4.700" y="8" width="1.600" height="3" fill="#555"/></svg>
<span class="t" style="left:1267.5px;top:425.4px;font-size:10.5px;line-height:12.5px;color:#f0f0f0;font-weight:bold;transform:scaleX(0.842);text-shadow:0 -1px 0 rgba(0,0,0,.55);">Dolgu:</span>
<div style="position:absolute;left:1302px;top:423px;width:36px;height:19px;background:#3b3b3b;border:1px solid #2e2e2e;border-bottom-color:#626262;border-right-color:#4a4a4a;box-sizing:border-box;"></div><div style="position:absolute;left:1338px;top:423px;width:18px;height:19px;background:linear-gradient(#727272,#606060);border:1px solid #2c2c2c;border-left:0;box-sizing:border-box;border-radius:0 2px 2px 0;"></div><svg style="left:1343px;top:431px" width="7" height="4" viewBox="0 0 7 4"><path d="M0 0h7l-3.500 4z" fill="#f0f0f0"/></svg>
<span class="t" style="left:1306.5px;top:426.5px;font-size:10.5px;line-height:12.5px;color:#f4f4f4;transform:scaleX(0.912);">100%</span>
<div style="position:absolute;left:1209px;top:445px;width:152px;height:2px;background:#333;"></div>
<div style="position:absolute;left:1209px;top:534px;width:152px;height:175px;background:#474747;"></div>
<div style="position:absolute;left:1350px;top:447px;width:11px;height:262px;background:#434343;"></div>
<div style="position:absolute;left:1209px;top:447px;width:141px;height:28px;background:#566780;"></div>
<div style="position:absolute;left:1209px;top:475px;width:141px;height:1px;background:#2f3a4a;"></div>
<div style="position:absolute;left:1209px;top:476px;width:141px;height:28px;background:#566780;"></div>
<div style="position:absolute;left:1209px;top:504px;width:141px;height:2px;background:#333;"></div>
<div style="position:absolute;left:1209px;top:506px;width:141px;height:28px;background:#4c4c4c;"></div>
<div style="position:absolute;left:1209px;top:534px;width:141px;height:1px;background:#333;"></div>
<div style="position:absolute;left:1200px;top:450px;width:23px;height:22px;background:#ffffff;border:1px solid #222;box-sizing:border-box;"></div>
<span class="t" style="left:1234px;top:456px;font-size:11px;line-height:13px;color:#f0f0f0;transform:scaleX(0.927);">Ton/Doygunluk 1</span>
<span class="t" style="left:1209px;top:485.5px;font-size:11px;line-height:13px;color:#f0f0f0;transform:scaleX(0.840);">an 1</span>
<span class="t" style="left:1209px;top:514.5px;font-size:11px;line-height:13px;color:#f0f0f0;transform:scaleX(0.840);">an 0</span>
<div style="position:absolute;left:1209px;top:708px;width:152px;height:1px;background:#333;"></div>
<div style="position:absolute;left:1209px;top:709px;width:152px;height:19px;background:#535353;border-top:1px solid #636363;box-sizing:border-box;"></div>
<svg style="left:1217px;top:714px" width="13" height="10" viewBox="0 0 13 10"><rect width="13" height="10" fill="#8e8e8e"/><circle cx="6.500" cy="5" r="2.600" fill="#505050"/></svg>
<svg style="left:1244px;top:713px" width="12" height="12" viewBox="0 0 12 12"><circle cx="6" cy="6" r="5" fill="#777" stroke="#c4c4c4" stroke-width="1.300"/><path d="M2.500 9.500a5 5 0 0 0 7-7z" fill="#e0e0e0"/></svg>
<svg style="left:1258px;top:722px" width="4" height="3" viewBox="0 0 4 3"><path d="M0 0h4l-2 2.500z" fill="#e0e0e0"/></svg>
<svg style="left:1271px;top:713px" width="13" height="11" viewBox="0 0 13 11"><path d="M0 0h5l1.500 2h6.500v9h-13z" fill="#c4c4c4"/></svg>
<svg style="left:1298px;top:714px" width="11" height="11" viewBox="0 0 11 11"><path d="M2 0h9v9h-4v-5h-5z" fill="#c4c4c4"/><path d="M.5 6h5.500v5z" fill="#c4c4c4"/></svg>
<svg style="left:1325px;top:713px" width="12" height="12" viewBox="0 0 12 12"><path d="M.5 2.500h11M4 2.500v-1.500h4v1.500" fill="none" stroke="#c4c4c4" stroke-width="1.200"/><path d="M1.500 4h9l-.8 8h-7.400z" fill="none" stroke="#c4c4c4" stroke-width="1.200"/><path d="M4.300 5v6M6 5v6M7.700 5v6" stroke="#c4c4c4" stroke-width="1"/></svg>
<svg style="left:0;top:0" width="1366" height="728"><defs><filter id="b1" x="-20%" y="-20%" width="140%" height="140%"><feGaussianBlur stdDeviation="1.2"/></filter></defs><g filter="url(#b1)"><rect x="438.6" y="266.6" width="38.0" height="3.5" fill="#e6ece6"/><rect x="438.6" y="270.1" width="41.4" height="3.5" fill="#1d4a2c"/><rect x="431.7" y="273.5" width="51.8" height="3.5" fill="#1c4a26"/><rect x="428.2" y="277.0" width="55.2" height="20.7" fill="#1c4a1f"/><rect x="431.7" y="297.7" width="48.3" height="6.9" fill="#1c4a1f"/><rect x="438.6" y="304.6" width="38.0" height="3.5" fill="#1c4a1f"/><rect x="445.5" y="308.0" width="27.6" height="3.5" fill="#1f4f22"/><rect x="448.9" y="311.5" width="6.9" height="3.5" fill="#7a877a"/><rect x="435.1" y="277.0" width="41.4" height="20.7" fill="#285f21"/><rect x="438.6" y="297.7" width="34.5" height="6.9" fill="#285f21"/><rect x="442.0" y="304.6" width="27.6" height="3.5" fill="#33742c"/><rect x="438.6" y="277.0" width="10.4" height="20.7" fill="#34722b"/><rect x="448.9" y="277.0" width="24.2" height="6.9" fill="#3f7d3a"/><rect x="455.8" y="277.0" width="13.8" height="3.5" fill="#5c9a5a"/><rect x="464.4" y="280.4" width="8.6" height="3.5" fill="#7fb27c"/><rect x="440.3" y="297.7" width="25.9" height="6.9" fill="#37802e"/><rect x="443.7" y="304.6" width="22.4" height="3.5" fill="#37802e"/><rect x="448.9" y="308.0" width="15.5" height="3.5" fill="#347a2c"/><rect x="449.9" y="284.6" width="17.3" height="12.4" fill="#143c11"/><rect x="456.5" y="290.4" width="6.9" height="4.8" fill="#020802"/><rect x="467.9" y="283.9" width="6.9" height="10.4" fill="#3c783a"/></g></svg>
<svg style="left:0;top:0" width="1366" height="728"><defs><filter id="b2" x="-20%" y="-20%" width="140%" height="140%"><feGaussianBlur stdDeviation="0.8"/></filter></defs><g filter="url(#b2)"><rect x="704.5" y="232.0" width="6.9" height="3.5" fill="#142b29"/><rect x="697.6" y="235.5" width="13.8" height="3.5" fill="#142b29"/><rect x="694.1" y="238.9" width="20.7" height="6.9" fill="#142b29"/><rect x="694.1" y="245.8" width="24.2" height="3.5" fill="#142b29"/><rect x="694.1" y="249.3" width="27.6" height="6.9" fill="#142b29"/><rect x="697.6" y="256.2" width="27.6" height="6.9" fill="#142b29"/><rect x="701.0" y="263.1" width="24.2" height="6.9" fill="#142b29"/><rect x="725.2" y="266.5" width="3.5" height="3.5" fill="#7d8583"/><rect x="704.5" y="270.0" width="20.7" height="3.5" fill="#142b29"/><rect x="711.4" y="273.4" width="13.8" height="3.5" fill="#142b29"/><rect x="714.8" y="276.9" width="10.4" height="3.5" fill="#5a6664"/><rect x="701.0" y="238.9" width="10.4" height="17.3" fill="#18302e"/><rect x="707.9" y="252.7" width="10.4" height="17.3" fill="#1c3834"/><rect x="697.6" y="235.5" width="3.5" height="3.5" fill="#6f7a78"/></g></svg>
<div style="position:absolute;left:1361px;top:62px;width:4px;height:666px;background:#545454;"></div><div style="position:absolute;left:1365px;top:62px;width:1px;height:666px;background:#3e3e3e;"></div>
<div style="position:absolute;left:1350px;top:447px;width:15px;height:262px;background:#414141;"></div>
<div style="position:absolute;left:1209px;top:43px;width:1px;height:685px;background:#3a3a3a;"></div>
<div class="a" style="left:939px;top:42px;width:270px;height:686px;background:#f0f0f0;border:1px solid #8c8c8c;box-sizing:border-box;box-shadow:inset 0 0 0 2px #fafafa"></div>
<div style="position:absolute;left:969px;top:45px;width:1px;height:680px;background:#e2e3e3;"></div>
<div style="position:absolute;left:970px;top:45px;width:1px;height:680px;background:#ffffff;"></div>
<span class="t" style="left:974px;top:49.5px;font-size:12px;line-height:14px;color:#6d6d6d;transform:scaleX(0.944);">Karıştırma Seçenekleri...</span>
<span class="t" style="left:974px;top:71.5px;font-size:12px;line-height:14px;color:#6d6d6d;transform:scaleX(0.951);">Ayarı Düzenle...</span>
<div style="position:absolute;left:971px;top:92.5px;width:236px;height:1px;background:#e0e0e0;"></div>
<div style="position:absolute;left:971px;top:93.5px;width:236px;height:1px;background:#ffffff;"></div>
<span class="t" style="left:974px;top:100.5px;font-size:12px;line-height:14px;color:#111;transform:scaleX(0.981);">Katmanları Çoğalt...</span>
<span class="t" style="left:974px;top:122.5px;font-size:12px;line-height:14px;color:#111;transform:scaleX(0.964);">Katmanları Sil</span>
<div style="position:absolute;left:971px;top:143.5px;width:236px;height:1px;background:#e0e0e0;"></div>
<div style="position:absolute;left:971px;top:144.5px;width:236px;height:1px;background:#ffffff;"></div>
<span class="t" style="left:974px;top:151.5px;font-size:12px;line-height:14px;color:#111;transform:scaleX(0.983);">Akıllı Nesneye Dönüştür</span>
<div style="position:absolute;left:971px;top:172.5px;width:236px;height:1px;background:#e0e0e0;"></div>
<div style="position:absolute;left:971px;top:173.5px;width:236px;height:1px;background:#ffffff;"></div>
<span class="t" style="left:974px;top:180.5px;font-size:12px;line-height:14px;color:#6d6d6d;transform:scaleX(0.963);">Katmanları Rasterleştir</span>
<span class="t" style="left:974px;top:202.5px;font-size:12px;line-height:14px;color:#6d6d6d;transform:scaleX(0.968);">Katman Stilini Rasterleştir</span>
<div style="position:absolute;left:971px;top:223.5px;width:236px;height:1px;background:#e0e0e0;"></div>
<div style="position:absolute;left:971px;top:224.5px;width:236px;height:1px;background:#ffffff;"></div>
<span class="t" style="left:974px;top:231.5px;font-size:12px;line-height:14px;color:#6d6d6d;transform:scaleX(0.950);">Katman Maskesini Devre Dışı Bırak</span>
<span class="t" style="left:974px;top:253.5px;font-size:12px;line-height:14px;color:#6d6d6d;transform:scaleX(0.953);">Vektörel Maskeyi Devre Dışı Bırak</span>
<span class="t" style="left:974px;top:275.5px;font-size:12px;line-height:14px;color:#111;transform:scaleX(0.976);">Kırpma Maskesi Oluştur</span>
<div style="position:absolute;left:971px;top:296.5px;width:236px;height:1px;background:#e0e0e0;"></div>
<div style="position:absolute;left:971px;top:297.5px;width:236px;height:1px;background:#ffffff;"></div>
<span class="t" style="left:974px;top:304.5px;font-size:12px;line-height:14px;color:#111;transform:scaleX(0.967);">Katmanları Bağla</span>
<span class="t" style="left:974px;top:326.5px;font-size:12px;line-height:14px;color:#6d6d6d;transform:scaleX(0.945);">Bağlı Katmanları Seç</span>
<div style="position:absolute;left:971px;top:347.5px;width:236px;height:1px;background:#e0e0e0;"></div>
<div style="position:absolute;left:971px;top:348.5px;width:236px;height:1px;background:#ffffff;"></div>
<span class="t" style="left:974px;top:355.5px;font-size:12px;line-height:14px;color:#6d6d6d;transform:scaleX(0.979);">Katman Stilini Kopyala</span>
<span class="t" style="left:974px;top:377.5px;font-size:12px;line-height:14px;color:#6d6d6d;transform:scaleX(0.983);">Katman Stilini Yapıştır</span>
<span class="t" style="left:974px;top:399.5px;font-size:12px;line-height:14px;color:#6d6d6d;">Katman Stilini Temizle</span>
<div style="position:absolute;left:971px;top:420.5px;width:236px;height:1px;background:#e0e0e0;"></div>
<div style="position:absolute;left:971px;top:421.5px;width:236px;height:1px;background:#ffffff;"></div>
<span class="t" style="left:974px;top:428.5px;font-size:12px;line-height:14px;color:#6d6d6d;transform:scaleX(0.981);">Şekil Niteliklerini Kopyala</span>
<span class="t" style="left:974px;top:450.5px;font-size:12px;line-height:14px;color:#6d6d6d;transform:scaleX(0.985);">Şekil Niteliklerini Yapıştır</span>
<div style="position:absolute;left:971px;top:471.5px;width:236px;height:1px;background:#e0e0e0;"></div>
<div style="position:absolute;left:971px;top:472.5px;width:236px;height:1px;background:#ffffff;"></div>
<div style="position:absolute;left:940px;top:476px;width:269px;height:22px;background:#d5e3f3;border:3px solid #e30613;box-sizing:border-box;"></div>
<span class="t" style="left:974px;top:479.5px;font-size:12px;line-height:14px;color:#111;transform:scaleX(0.977);">Katmanları Birleştir</span>
<span class="t" style="left:974px;top:501.5px;font-size:12px;line-height:14px;color:#111;transform:scaleX(0.982);">Görüneni Birleştir</span>
<span class="t" style="left:974px;top:523.5px;font-size:12px;line-height:14px;color:#111;transform:scaleX(0.990);">Görüntüyü Düzleştir</span>
<div style="position:absolute;left:971px;top:544.5px;width:236px;height:1px;background:#e0e0e0;"></div>
<div style="position:absolute;left:971px;top:545.5px;width:236px;height:1px;background:#ffffff;"></div>
<span class="t" style="left:974px;top:552.5px;font-size:12px;line-height:14px;color:#111;transform:scaleX(0.966);">Renk Yok</span>
<span class="t" style="left:974px;top:574.5px;font-size:12px;line-height:14px;color:#111;transform:scaleX(0.947);">Kırmızı</span>
<span class="t" style="left:974px;top:596.5px;font-size:12px;line-height:14px;color:#111;transform:scaleX(1.026);">Turuncu</span>
<span class="t" style="left:974px;top:618.5px;font-size:12px;line-height:14px;color:#111;transform:scaleX(0.845);">Sarı</span>
<span class="t" style="left:974px;top:640.5px;font-size:12px;line-height:14px;color:#111;transform:scaleX(0.963);">Yeşil</span>
<span class="t" style="left:974px;top:662.5px;font-size:12px;line-height:14px;color:#111;transform:scaleX(1.026);">Mavi</span>
<span class="t" style="left:974px;top:684.5px;font-size:12px;line-height:14px;color:#111;transform:scaleX(0.965);">Menekşe</span>
<span class="t" style="left:974px;top:706.5px;font-size:12px;line-height:14px;color:#111;transform:scaleX(0.938);">Gri</span>
</body></html>
